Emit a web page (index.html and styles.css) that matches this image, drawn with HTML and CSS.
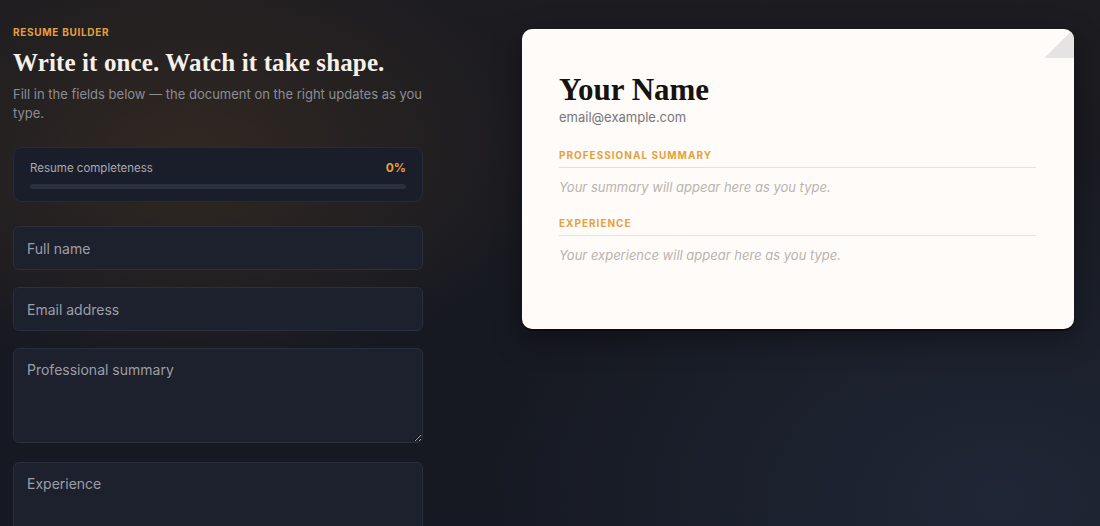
FILE: index.html
```html
<!DOCTYPE html>
<html lang="en">
<head>
<meta charset="utf-8">
<title>Resume Builder</title>
<link rel="stylesheet" href="styles.css">
</head>
<body>
<main class="page">
  <section class="editor">
    <p class="eyebrow">RESUME BUILDER</p>
    <h1 class="title">Write it once. Watch it take shape.</h1>
    <p class="lede">Fill in the fields below — the document on the right updates as you type.</p>

    <div class="progress">
      <div class="progress-head">
        <span class="progress-label">Resume completeness</span>
        <span class="progress-value">0%</span>
      </div>
      <div class="progress-track"><div class="progress-fill" style="width:0%"></div></div>
    </div>

    <form class="fields">
      <input class="field" type="text" placeholder="Full name">
      <input class="field" type="email" placeholder="Email address">
      <textarea class="field area" placeholder="Professional summary"></textarea>
      <textarea class="field area" placeholder="Experience"></textarea>
    </form>
  </section>

  <section class="preview">
    <article class="sheet">
      <span class="fold"></span>
      <h2 class="name">Your Name</h2>
      <p class="email">email@example.com</p>
      <h3 class="sec-title">PROFESSIONAL SUMMARY</h3>
      <p class="sec-body">Your summary will appear here as you type.</p>
      <h3 class="sec-title">EXPERIENCE</h3>
      <p class="sec-body">Your experience will appear here as you type.</p>
    </article>
  </section>
</main>
</body>
</html>
```

FILE: styles.css
```css
* { box-sizing: border-box; }
html, body { margin: 0; height: 100%; }
body {
  font-family: Inter, "Noto Sans", "Liberation Sans", sans-serif;
  color: #e8e4df;
  background:
    radial-gradient(ellipse 360px 220px at 190px 160px, rgba(72, 54, 36, 0.5), rgba(72, 54, 36, 0) 100%),
    radial-gradient(ellipse 520px 360px at 1000px 500px, rgba(36, 44, 62, 0.7), rgba(36, 44, 62, 0) 100%),
    linear-gradient(180deg, #1d1c20 0%, #171921 60%, #161923 100%);
  overflow: hidden;
}
.page {
  display: grid;
  grid-template-columns: 410px 552px;
  column-gap: 99px;
  padding: 0 26px 0 13px;
  align-items: start;
}
.editor { padding-top: 26px; }
.eyebrow {
  margin: 0;
  font-size: 10px;
  font-weight: 700;
  letter-spacing: 0.07em;
  color: #e3a23e;
  line-height: 12px;
}
.title {
  margin: 10px 0 0;
  font-family: "Liberation Serif", "DejaVu Serif", serif;
  font-weight: 700;
  font-size: 25px;
  line-height: 30px;
  color: #f5f0ea;
  letter-spacing: 0.005em;
}
.lede {
  margin: 7px 0 0;
  font-size: 13px;
  line-height: 19px;
  color: #8b8d95;
}
.progress {
  margin-top: 24px;
  height: 55px;
  padding: 13px 16px 0 16px;
  background: #1a1e2a;
  border: 1px solid #262b39;
  border-radius: 9px;
}
.progress-head {
  display: flex;
  justify-content: space-between;
  align-items: center;
  font-size: 11.5px;
  line-height: 14px;
}
.progress-label { color: #a7a9b0; }
.progress-value { color: #e3a23e; font-weight: 700; font-size: 12px; }
.progress-track {
  margin-top: 9px;
  height: 5px;
  border-radius: 3px;
  background: #2b303e;
  overflow: hidden;
}
.progress-fill { height: 100%; background: #e3a23e; }
.fields {
  margin-top: 24px;
  display: flex;
  flex-direction: column;
  gap: 17px;
}
.field {
  display: block;
  width: 100%;
  height: 44px;
  margin: 0;
  padding: 0 13px;
  font-family: inherit;
  font-size: 14px;
  color: #e8e4df;
  background: #1d212e;
  border: 1px solid #2a2f3d;
  border-radius: 6px;
  outline: none;
}
.field::placeholder { color: #9c9ea6; }
.area {
  height: 95px;
  padding-top: 12px;
  line-height: 18px;
  resize: vertical;
}
.fields .area + .area { margin-top: 2px; }

.preview { padding-top: 29px; }
.sheet {
  position: relative;
  height: 300px;
  padding: 44px 38px 0 37px;
  background: #fffbf8;
  border-radius: 10px;
  box-shadow: 0 2px 0 #0b0c10, 0 10px 30px rgba(0, 0, 0, 0.35);
  overflow: hidden;
}
.fold {
  position: absolute;
  top: 0;
  right: 0;
  width: 29px;
  height: 29px;
  background: linear-gradient(to bottom right, rgba(0,0,0,0) 50%, #e6e4e2 50%);
}
.name {
  margin: 0;
  font-family: "Liberation Serif", "DejaVu Serif", serif;
  font-weight: 700;
  font-size: 31px;
  line-height: 34px;
  color: #15120f;
}
.email {
  margin: 2px 0 0;
  font-size: 13px;
  line-height: 16px;
  color: #77757a;
}
.sec-title {
  margin: 24px 0 0;
  padding-bottom: 6px;
  border-bottom: 1px solid #e6e2de;
  font-size: 10px;
  font-weight: 700;
  letter-spacing: 0.1em;
  line-height: 12px;
  color: #e3a23e;
}
.sec-body + .sec-title { margin-top: 22px; }
.sec-body {
  margin: 11px 0 0;
  font-size: 13px;
  line-height: 16px;
  font-style: italic;
  color: #b9b4af;
}
```
